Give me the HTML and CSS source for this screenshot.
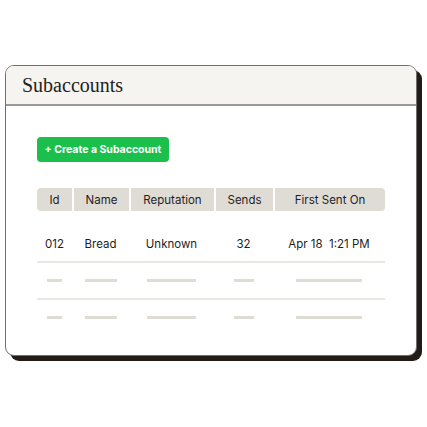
FILE: index.html
```html
<!DOCTYPE html>
<html lang="en">
<head>
    <meta charset="UTF-8">
    <title>Subaccounts</title>
    <link rel="stylesheet" href="styles.css">
</head>
<body>
    <div class="card">
        <div class="card-header">
            <h1>Subaccounts</h1>
        </div>
        <div class="card-body">
            <button class="btn-create">+ Create a Subaccount</button>
            <div class="table">
                <div class="row head">
                    <div class="cell">Id</div>
                    <div class="cell">Name</div>
                    <div class="cell">Reputation</div>
                    <div class="cell">Sends</div>
                    <div class="cell">First Sent On</div>
                </div>
                <div class="row data">
                    <div class="cell">012</div>
                    <div class="cell">Bread</div>
                    <div class="cell">Unknown</div>
                    <div class="cell">32</div>
                    <div class="cell">Apr 18&nbsp;&nbsp;1:21 PM</div>
                </div>
                <div class="row empty">
                    <div class="cell"><span class="dash w15"></span></div>
                    <div class="cell"><span class="dash w32"></span></div>
                    <div class="cell"><span class="dash w49"></span></div>
                    <div class="cell"><span class="dash w20"></span></div>
                    <div class="cell"><span class="dash w66"></span></div>
                </div>
                <div class="row empty">
                    <div class="cell"><span class="dash w15"></span></div>
                    <div class="cell"><span class="dash w32"></span></div>
                    <div class="cell"><span class="dash w49"></span></div>
                    <div class="cell"><span class="dash w20"></span></div>
                    <div class="cell"><span class="dash w66"></span></div>
                </div>
            </div>
        </div>
    </div>
</body>
</html>
```

FILE: styles.css
```css
body {
    margin: 0;
    padding: 65px 0 0 5px;
    min-height: 100vh;
    box-sizing: border-box;
    background-color: #fff;
    font-family: Inter, "Noto Sans", sans-serif;
    color: #1e1e1e;
}

.card {
    width: 410px;
    height: 289px;
    border: 1px solid #6f6f6f;
    border-radius: 9px;
    background-color: #fff;
    box-shadow: 5px 5px 0 0 #231b15;
}

.card-header {
    height: 38px;
    background-color: #f5f4f1;
    border-bottom: 2px solid #9a9a9a;
    border-radius: 8px 8px 0 0;
    display: flex;
    align-items: center;
    padding-left: 16px;
}

h1 {
    margin: 0;
    font-family: "Liberation Serif", serif;
    font-weight: 400;
    font-size: 20px;
    color: #222;
}

.card-body {
    padding: 31px 0 0 31px;
}

.btn-create {
    display: block;
    width: 132px;
    height: 25px;
    border: 0;
    border-radius: 4px;
    background-color: #1bbf4b;
    color: #fff;
    font-family: Inter, sans-serif;
    font-weight: 700;
    font-size: 10.5px;
    padding: 0;
}

.table {
    width: 348px;
    margin-top: 26px;
}

.row {
    display: grid;
    grid-template-columns: 35px 57px 85px 59px 112px;
}

.cell {
    display: flex;
    align-items: center;
    justify-content: center;
    font-size: 11.5px;
}

.head {
    height: 23px;
    margin-bottom: 15px;
}

.head .cell {
    background-color: #dfdcd6;
    border-left: 2px solid #fff;
}

.head .cell:first-child {
    border-left: 0;
    border-radius: 4px 0 0 4px;
}

.head .cell:last-child {
    border-radius: 0 4px 4px 0;
}

.data,
.empty {
    height: 35px;
    border-bottom: 2px solid #e9e7e2;
}

.empty:last-child {
    border-bottom: 0;
}

.dash {
    display: block;
    height: 3px;
    background-color: #dfdcd6;
}

.w15 { width: 15px; }
.w32 { width: 32px; }
.w49 { width: 49px; }
.w20 { width: 20px; }
.w66 { width: 66px; }
```
